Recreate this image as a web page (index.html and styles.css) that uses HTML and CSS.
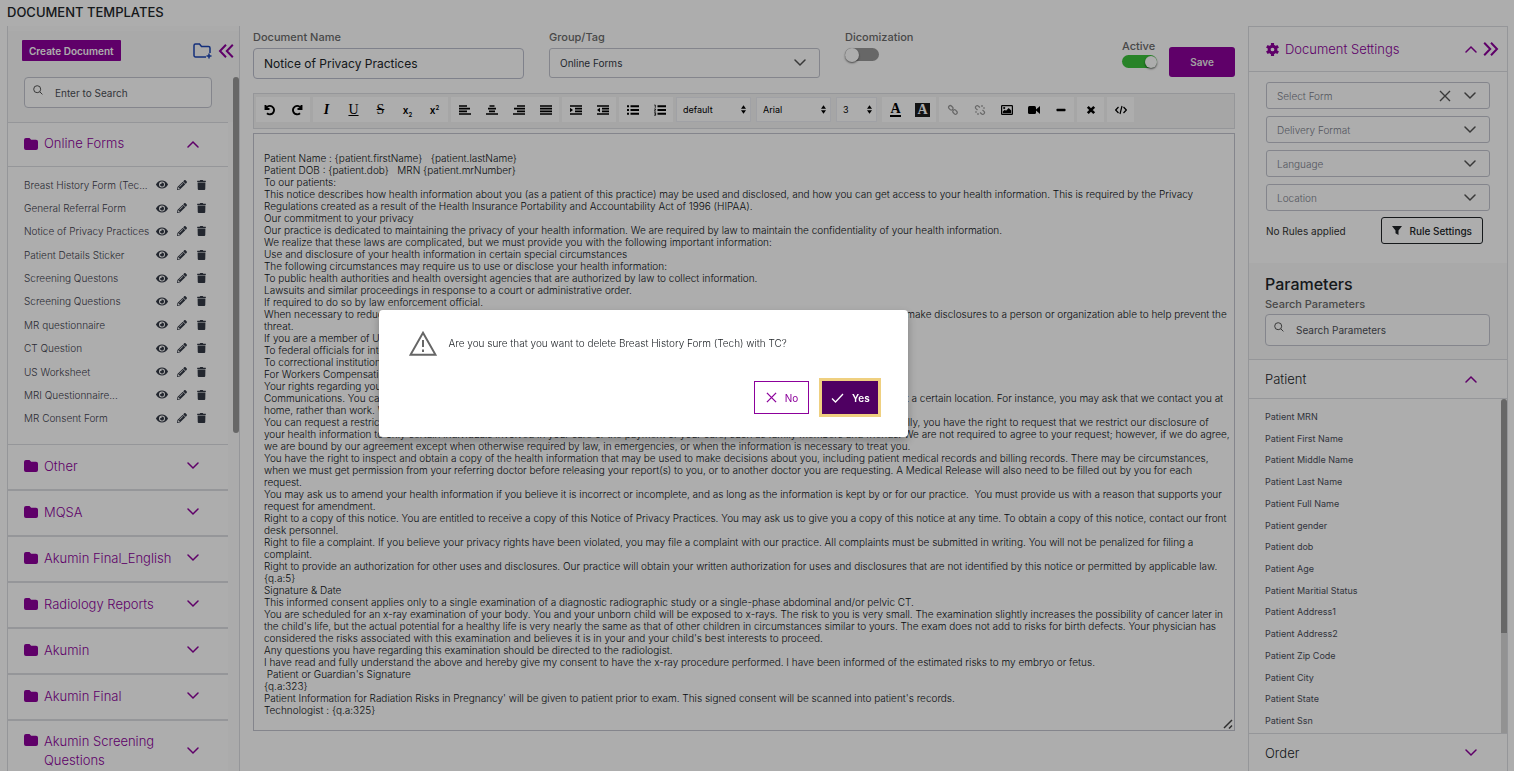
FILE: index.html
```html
<!DOCTYPE html>
<html lang="en">
<head>
<meta charset="utf-8">
<title>Document Templates</title>
<link rel="stylesheet" href="styles.css">
</head>
<body>
<svg class="sprite" aria-hidden="true">
  <symbol id="eye" viewBox="0 0 576 512"><path d="M572.52 241.4C518.29 135.59 410.93 64 288 64S57.68 135.64 3.48 241.41a32.35 32.35 0 0 0 0 29.19C57.71 376.41 165.07 448 288 448s230.32-71.64 284.52-177.41a32.35 32.35 0 0 0 0-29.19zM288 400a144 144 0 1 1 144-144 143.93 143.93 0 0 1-144 144zm0-240a95.31 95.31 0 0 0-25.31 3.79 47.85 47.85 0 0 1-66.9 66.9A95.78 95.78 0 1 0 288 160z"/></symbol>
  <symbol id="pen" viewBox="0 0 512 512"><path d="M497.9 142.1l-46.1 46.1c-4.7 4.7-12.3 4.7-17 0l-111-111c-4.7-4.7-4.7-12.3 0-17l46.1-46.1c18.7-18.7 49.1-18.7 67.9 0l60.1 60.1c18.8 18.7 18.8 49.1 0 67.9zM284.2 99.8L21.6 362.4.4 483.9c-2.9 16.4 11.4 30.6 27.8 27.8l121.5-21.3 262.6-262.6c4.7-4.7 4.7-12.3 0-17l-111-111c-4.8-4.7-12.4-4.7-17.1 0zM124.1 339.9c-5.5-5.5-5.5-14.3 0-19.8l154-154c5.5-5.5 14.3-5.5 19.8 0s5.5 14.3 0 19.8l-154 154c-5.5 5.5-14.3 5.5-19.8 0zM88 424h48v36.3l-64.5 11.3-31.1-31.1L51.7 376H88v48z"/></symbol>
  <symbol id="trash" viewBox="0 0 448 512"><path d="M432 32H312l-9.4-18.7A24 24 0 0 0 281.1 0H166.8a23.72 23.72 0 0 0-21.4 13.3L136 32H16A16 16 0 0 0 0 48v32a16 16 0 0 0 16 16h416a16 16 0 0 0 16-16V48a16 16 0 0 0-16-16zM32 467a48 48 0 0 0 47.900 45h288.200a48 48 0 0 0 47.900-45L424 128H24z"/></symbol>
  <symbol id="folder" viewBox="0 0 14 12"><path d="M2 0h3.5l1.6 1.8H12a2 2 0 0 1 2 2V10a2 2 0 0 1-2 2H2a2 2 0 0 1-2-2V2a2 2 0 0 1 2-2z"/></symbol>
  <symbol id="down" viewBox="0 0 12 8"><path d="M1 1l5 5 5-5" fill="none" stroke="currentColor" stroke-width="1.5" stroke-linecap="round"/></symbol>
  <symbol id="up" viewBox="0 0 12 8"><path d="M1 7l5-5 5 5" fill="none" stroke="currentColor" stroke-width="1.5" stroke-linecap="round"/></symbol>
  <symbol id="search" viewBox="0 0 10 10"><g fill="none" stroke="currentColor"><circle cx="4.2" cy="4.2" r="3.5"/><path d="M6.8 6.8l2.6 2.6"/></g></symbol>
  <symbol id="cross" viewBox="0 0 12 12"><path d="M1 1l10 10M11 1L1 11" fill="none" stroke="currentColor" stroke-width="1.4"/></symbol>
  <symbol id="sort" viewBox="0 0 6 10"><path d="M0 4l3-4 3 4zM0 6h6l-3 4z"/></symbol>
</svg>

<div class="page">
  <h1 class="page-title">DOCUMENT TEMPLATES</h1>
  <div class="columns">
    <aside class="sidebar">
      <div class="side-top">
        <div class="side-actions">
          <button class="create">Create Document</button>
          <button class="plain new-folder" aria-label="New folder"><svg width="19" height="16" viewBox="0 0 19 16"><path d="M13 14H2.500a1.500 1.500 0 0 1-1.500-1.500V2.500A1.500 1.500 0 0 1 2.500 1h4l2 2.500h7A1.500 1.500 0 0 1 17 5v5" fill="none" stroke="currentColor" stroke-width="1.500"/><path d="M16 10.500v5M13.500 13h5" stroke="currentColor" stroke-width="1.500"/></svg></button>
          <button class="plain" aria-label="Collapse"><svg width="16" height="14" viewBox="0 0 16 14"><path d="M8 .8L2 7l6 6.200M14.800.8L8.800 7l6 6.200" fill="none" stroke="currentColor" stroke-width="2"/></svg></button>
        </div>
        <label class="search-box"><svg class="i-search"><use href="#search"/></svg><input type="text" placeholder="Enter to Search" aria-label="Search documents"></label>
      </div>
      <div class="side-body">
        <button class="group first"><svg class="i-folder"><use href="#folder"/></svg><span>Online Forms</span><svg class="i-chev"><use href="#up"/></svg></button>
        <ul class="docs">
          <li><span>Breast History Form (Tec...</span><svg class="i-eye"><use href="#eye"/></svg><svg class="i-pen"><use href="#pen"/></svg><svg class="i-trash"><use href="#trash"/></svg></li>
          <li><span>General Referral Form</span><svg class="i-eye"><use href="#eye"/></svg><svg class="i-pen"><use href="#pen"/></svg><svg class="i-trash"><use href="#trash"/></svg></li>
          <li><span>Notice of Privacy Practices</span><svg class="i-eye"><use href="#eye"/></svg><svg class="i-pen"><use href="#pen"/></svg><svg class="i-trash"><use href="#trash"/></svg></li>
          <li><span>Patient Details Sticker</span><svg class="i-eye"><use href="#eye"/></svg><svg class="i-pen"><use href="#pen"/></svg><svg class="i-trash"><use href="#trash"/></svg></li>
          <li><span>Screening Questons</span><svg class="i-eye"><use href="#eye"/></svg><svg class="i-pen"><use href="#pen"/></svg><svg class="i-trash"><use href="#trash"/></svg></li>
          <li><span>Screening Questions</span><svg class="i-eye"><use href="#eye"/></svg><svg class="i-pen"><use href="#pen"/></svg><svg class="i-trash"><use href="#trash"/></svg></li>
          <li><span>MR questionnaire</span><svg class="i-eye"><use href="#eye"/></svg><svg class="i-pen"><use href="#pen"/></svg><svg class="i-trash"><use href="#trash"/></svg></li>
          <li><span>CT Question</span><svg class="i-eye"><use href="#eye"/></svg><svg class="i-pen"><use href="#pen"/></svg><svg class="i-trash"><use href="#trash"/></svg></li>
          <li><span>US Worksheet</span><svg class="i-eye"><use href="#eye"/></svg><svg class="i-pen"><use href="#pen"/></svg><svg class="i-trash"><use href="#trash"/></svg></li>
          <li><span>MRI Questionnaire...</span><svg class="i-eye"><use href="#eye"/></svg><svg class="i-pen"><use href="#pen"/></svg><svg class="i-trash"><use href="#trash"/></svg></li>
          <li><span>MR Consent Form</span><svg class="i-eye"><use href="#eye"/></svg><svg class="i-pen"><use href="#pen"/></svg><svg class="i-trash"><use href="#trash"/></svg></li>
        </ul>
        <button class="group"><svg class="i-folder"><use href="#folder"/></svg><span>Other</span><svg class="i-chev"><use href="#down"/></svg></button>
        <button class="group"><svg class="i-folder"><use href="#folder"/></svg><span>MQSA</span><svg class="i-chev"><use href="#down"/></svg></button>
        <button class="group"><svg class="i-folder"><use href="#folder"/></svg><span>Akumin Final_English</span><svg class="i-chev"><use href="#down"/></svg></button>
        <button class="group"><svg class="i-folder"><use href="#folder"/></svg><span>Radiology Reports</span><svg class="i-chev"><use href="#down"/></svg></button>
        <button class="group"><svg class="i-folder"><use href="#folder"/></svg><span>Akumin</span><svg class="i-chev"><use href="#down"/></svg></button>
        <button class="group"><svg class="i-folder"><use href="#folder"/></svg><span>Akumin Final</span><svg class="i-chev"><use href="#down"/></svg></button>
        <button class="group tall"><svg class="i-folder"><use href="#folder"/></svg><span>Akumin Screening Questions</span><svg class="i-chev"><use href="#down"/></svg></button>
      </div>
      <div class="side-scroll"></div>
    </aside>

    <main class="center">
      <div class="form-row">
        <div class="form-col">
          <label class="caption" for="doc-name">Document Name</label>
          <input class="doc-name" id="doc-name" type="text" value="Notice of Privacy Practices">
        </div>
        <div class="form-col">
          <label class="caption" for="group-tag">Group/Tag</label>
          <div class="select-box tag-box"><select id="group-tag"><option>Online Forms</option></select><svg class="i-chev"><use href="#down"/></svg></div>
        </div>
        <div class="form-col narrow">
          <label class="caption" for="dicom">Dicomization</label>
          <input class="toggle" id="dicom" type="checkbox">
        </div>
        <div class="form-end">
          <div class="active-col">
            <label class="caption" for="active">Active</label>
            <input class="toggle" id="active" type="checkbox" checked>
          </div>
          <button class="save">Save</button>
        </div>
      </div>

      <div class="toolbar">
        <div class="tools">
          <button aria-label="Undo"><svg viewBox="0 0 12 12"><path d="M1.500 1v4h4M2 4.500A4.200 4.200 0 1 1 3 9.200" fill="none" stroke="currentColor" stroke-width="1.900"/></svg></button>
          <button aria-label="Redo"><svg viewBox="0 0 12 12"><path d="M10.500 1v4h-4M10 4.500A4.200 4.200 0 1 0 9 9.200" fill="none" stroke="currentColor" stroke-width="1.900"/></svg></button>
        </div>
        <div class="tools">
          <button class="serif"><i>I</i></button>
          <button class="serif light"><u>U</u></button>
          <button class="serif light"><s>S</s></button>
          <button class="script">x<sub>2</sub></button>
          <button class="script">x<sup>2</sup></button>
        </div>
        <div class="tools">
          <button aria-label="Align left"><svg viewBox="0 0 12 12"><path d="M0 2h8M0 4.700h11M0 7.300h8M0 10h12" stroke="currentColor" stroke-width="1.700"/></svg></button>
          <button aria-label="Align centre"><svg viewBox="0 0 12 12"><path d="M3.500 2h5M2 4.700h8M3 7.300h6M0 10h12" stroke="currentColor" stroke-width="1.700"/></svg></button>
          <button aria-label="Align right"><svg viewBox="0 0 12 12"><path d="M4 2h8M1 4.700h11M4 7.300h8M0 10h12" stroke="currentColor" stroke-width="1.700"/></svg></button>
          <button aria-label="Justify"><svg viewBox="0 0 12 12"><path d="M0 2h12M0 4.700h12M0 7.300h12M0 10h12" stroke="currentColor" stroke-width="1.700"/></svg></button>
        </div>
        <div class="tools">
          <button aria-label="Indent"><svg viewBox="0 0 12 12"><path d="M0 2h12M5 4.700h7M5 7.300h7M0 10h12" stroke="currentColor" stroke-width="1.700"/><path d="M0 3.800L3 6 0 8.200z"/></svg></button>
          <button aria-label="Outdent"><svg viewBox="0 0 12 12"><path d="M0 2h12M5 4.700h7M5 7.300h7M0 10h12" stroke="currentColor" stroke-width="1.700"/><path d="M3 3.800L0 6l3 2.200z"/></svg></button>
        </div>
        <div class="tools">
          <button aria-label="Bulleted list"><svg viewBox="0 0 12 12"><path d="M0 2.200h2M0 6h2M0 9.800h2M3.500 2.200H12M3.500 6H12M3.500 9.800H12" stroke="currentColor" stroke-width="2"/></svg></button>
          <button aria-label="Numbered list"><svg viewBox="0 0 12 12"><path d="M3.500 2.200H12M3.500 6H12M3.500 9.800H12" stroke="currentColor" stroke-width="2"/><path d="M.3 1h1v2.800M.2 5h1.500L.4 7.200h1.400M.2 8.700h1.400v2.600H.2M.4 10h1.200" fill="none" stroke="currentColor" stroke-width=".8"/></svg></button>
        </div>
        <div class="tool-select block"><select aria-label="Block style"><option>default</option></select><svg class="i-sort"><use href="#sort"/></svg></div>
        <div class="tool-select face"><select aria-label="Font"><option>Arial</option></select><svg class="i-sort"><use href="#sort"/></svg></div>
        <div class="tool-select size"><select aria-label="Font size"><option>3</option></select><svg class="i-sort"><use href="#sort"/></svg></div>
        <div class="tools">
          <button class="ink"><span>A</span></button>
          <button class="ink mark"><span>A</span></button>
        </div>
        <div class="tools">
          <button class="off" aria-label="Link"><svg viewBox="0 0 12 12"><g fill="none" stroke="currentColor" stroke-width="1.300"><rect x="-2.400" y="-1.700" width="4.800" height="3.400" rx="1.500" transform="translate(3.800 3.800) rotate(45)"/><rect x="-2.400" y="-1.700" width="4.800" height="3.400" rx="1.500" transform="translate(8 8) rotate(45)"/></g></svg></button>
          <button class="off" aria-label="Unlink"><svg viewBox="0 0 12 12"><path d="M6 3.500L4.500 2.200A1.600 1.600 0 0 0 2 4.600L3.500 6M6 8.500L7.500 9.800A1.600 1.600 0 0 0 10 7.400L8.500 6M8 1v2M11 4H9M4 11V9M1 8h2" fill="none" stroke="currentColor" stroke-width="1.200"/></svg></button>
          <button aria-label="Image"><svg viewBox="0 0 12 12"><rect x=".6" y="1.600" width="10.800" height="8.800" rx=".6" fill="none" stroke="currentColor" stroke-width="1.200"/><circle cx="3.200" cy="4" r="1.100"/><path d="M1.800 9.200V7.500l2-1.800 1.200 1 2.700-2.800 2.500 2.600v2.700z"/></svg></button>
          <button aria-label="Video"><svg viewBox="0 0 12 12"><rect y="2" width="8" height="8" rx="1.500"/><path d="M8 5.500L12 2v8L8 6.500z"/></svg></button>
          <button aria-label="Rule"><svg viewBox="0 0 12 12"><rect x="1.500" y="4.800" width="9" height="2.400" rx=".6"/></svg></button>
        </div>
        <div class="tools"><button aria-label="Clear formatting"><svg viewBox="0 0 12 12"><path d="M2.800 2.800l6.400 6.400M9.200 2.800L2.800 9.200" stroke="currentColor" stroke-width="2.600"/></svg></button></div>
        <div class="tools"><button aria-label="Source"><svg viewBox="0 0 12 12"><path d="M3.500 3L.7 6l2.800 3M8.500 3l2.800 3-2.800 3M7 2L5 10" fill="none" stroke="currentColor" stroke-width="1.200"/></svg></button></div>
      </div>

      <div class="editor">
        <p>Patient Name : {patient.firstName} &nbsp; {patient.lastName}</p>
        <p>Patient DOB : {patient.dob} &nbsp; MRN {patient.mrNumber}</p>
        <p>To our patients:</p>
        <p>This notice describes how health information about you (as a patient of this practice) may be used and disclosed, and how you can get access to your health information. This is required by the Privacy<br>Regulations created as a result of the Health Insurance Portability and Accountability Act of 1996 (HIPAA).</p>
        <p>Our commitment to your privacy</p>
        <p>Our practice is dedicated to maintaining the privacy of your health information. We are required by law to maintain the confidentiality of your health information.</p>
        <p>We realize that these laws are complicated, but we must provide you with the following important information:</p>
        <p>Use and disclosure of your health information in certain special circumstances</p>
        <p>The following circumstances may require us to use or disclose your health information:</p>
        <p>To public health authorities and health oversight agencies that are authorized by law to collect information.</p>
        <p>Lawsuits and similar proceedings in response to a court or administrative order.</p>
        <p>If required to do so by law enforcement official.</p>
        <p>When necessary to reduce or prevent a serious threat to your health and safety or the health and safety of another individual. We will only make disclosures to a person or organization able to help prevent the<br>threat.</p>
        <p>If you are a member of U.S. or foreign military forces (including veterans) and if required by the appropriate authorities.</p>
        <p>To federal officials for intelligence and national security activities authorized by law.</p>
        <p>To correctional institutions or law enforcement officials if you are an inmate or under the custody of an official.</p>
        <p>For Workers Compensation and similar programs.</p>
        <p>Your rights regarding your health information:</p>
        <p>Communications. You can request that our practice communicate with you about your health and related issues in a particular manner or at a certain location. For instance, you may ask that we contact you at<br>home, rather than work. We will accommodate reasonable requests.</p>
        <p>You can request a restriction in our use or disclosure of your health information for treatment, payment or health care operations. Additionally, you have the right to request that we restrict our disclosure of<br>your health information to only certain individuals involved in your care or the payment of your care, such as family members and friends. We are not required to agree to your request; however, if we do agree,<br>we are bound by our agreement except when otherwise required by law, in emergencies, or when the information is necessary to treat you.</p>
        <p>You have the right to inspect and obtain a copy of the health information that may be used to make decisions about you, including patient medical records and billing records. There may be circumstances,<br>when we must get permission from your referring doctor before releasing your report(s) to you, or to another doctor you are requesting. A Medical Release will also need to be filled out by you for each<br>request.</p>
        <p>You may ask us to amend your health information if you believe it is incorrect or incomplete, and as long as the information is kept by or for our practice. &nbsp;You must provide us with a reason that supports your<br>request for amendment.</p>
        <p>Right to a copy of this notice. You are entitled to receive a copy of this Notice of Privacy Practices. You may ask us to give you a copy of this notice at any time. To obtain a copy of this notice, contact our front<br>desk personnel.</p>
        <p>Right to file a complaint. If you believe your privacy rights have been violated, you may file a complaint with our practice. All complaints must be submitted in writing. You will not be penalized for filing a<br>complaint.</p>
        <p>Right to provide an authorization for other uses and disclosures. Our practice will obtain your written authorization for uses and disclosures that are not identified by this notice or permitted by applicable law.</p>
        <p>{q.a:5}</p>
        <p>Signature &amp; Date</p>
        <p>This informed consent applies only to a single examination of a diagnostic radiographic study or a single-phase abdominal and/or pelvic CT.</p>
        <p>You are scheduled for an x-ray examination of your body. You and your unborn child will be exposed to x-rays. The risk to you is very small. The examination slightly increases the possibility of cancer later in<br>the child's life, but the actual potential for a healthy life is very nearly the same as that of other children in circumstances similar to yours. The exam does not add to risks for birth defects. Your physician has<br>considered the risks associated with this examination and believes it is in your and your child's best interests to proceed.</p>
        <p>Any questions you have regarding this examination should be directed to the radiologist.</p>
        <p>I have read and fully understand the above and hereby give my consent to have the x-ray procedure performed. I have been informed of the estimated risks to my embryo or fetus.</p>
        <p>&nbsp;Patient or Guardian's Signature</p>
        <p>{q.a:323}</p>
        <p>Patient Information for Radiation Risks in Pregnancy' will be given to patient prior to exam. This signed consent will be scanned into patient's records.</p>
        <p>Technologist : {q.a:325}</p>
        <svg class="grip" viewBox="0 0 10 10"><path d="M1 9l8-8M6 9.500l3-3" stroke="currentColor" stroke-width="1.500"/></svg>
      </div>
    </main>

    <aside class="settings">
      <div class="set-head">
        <svg class="i-gear" viewBox="0 0 14 14"><circle cx="7" cy="7" r="3.600" fill="none" stroke="currentColor" stroke-width="3.200"/><path d="M7 0v3M7 11v3M.9 3.500l2.600 1.500M10.500 9l2.600 1.500M.9 10.500L3.500 9M10.500 5l2.600-1.500" stroke="currentColor" stroke-width="3.400"/></svg>
        <h2>Document Settings</h2>
        <svg class="i-chev"><use href="#up"/></svg>
        <button class="plain" aria-label="Expand"><svg width="16" height="14" viewBox="0 0 16 14"><path d="M1.200.8l6 6.200-6 6.200M8 .8L14 7l-6 6.200" fill="none" stroke="currentColor" stroke-width="2"/></svg></button>
      </div>
      <div class="set-body">
        <div class="select-box"><select aria-label="Select Form"><option>Select Form</option></select><svg class="i-clear"><use href="#cross"/></svg><svg class="i-chev"><use href="#down"/></svg></div>
        <div class="select-box"><select aria-label="Delivery Format"><option>Delivery Format</option></select><svg class="i-chev"><use href="#down"/></svg></div>
        <div class="select-box"><select aria-label="Language"><option>Language</option></select><svg class="i-chev"><use href="#down"/></svg></div>
        <div class="select-box"><select aria-label="Location"><option>Location</option></select><svg class="i-chev"><use href="#down"/></svg></div>
        <div class="rules"><span>No Rules applied</span><button class="rule-btn"><svg width="10" height="9" viewBox="0 0 10 9"><path d="M0 0h10L6.500 4.500V9l-3-1.800V4.500z"/></svg>Rule Settings</button></div>
      </div>
      <div class="params">
        <h2>Parameters</h2>
        <label class="caption" for="param-search">Search Parameters</label>
        <div class="search-box"><svg class="i-search"><use href="#search"/></svg><input id="param-search" type="text" placeholder="Search Parameters"></div>
      </div>
      <button class="p-group"><span>Patient</span><svg class="i-chev"><use href="#up"/></svg></button>
      <div class="p-list">
        <ul>
          <li>Patient MRN</li><li>Patient First Name</li><li>Patient Middle Name</li><li>Patient Last Name</li><li>Patient Full Name</li><li>Patient gender</li><li>Patient dob</li><li>Patient Age</li><li>Patient Maritial Status</li><li>Patient Address1</li><li>Patient Address2</li><li>Patient Zip Code</li><li>Patient City</li><li>Patient State</li><li>Patient Ssn</li>
        </ul>
        <div class="p-scroll"></div>
      </div>
      <button class="p-group"><span>Order</span><svg class="i-chev"><use href="#down"/></svg></button>
    </aside>
  </div>
</div>

<div class="backdrop"></div>
<div class="dialog" role="dialog" aria-modal="true" aria-labelledby="ask">
  <div class="ask">
    <svg width="28" height="25" viewBox="0 0 28 25"><path d="M14 1.800L26.500 23.800h-25z" fill="none" stroke="#666" stroke-width="2"/><path d="M14 9v7M14 18.500v2.500" stroke="#666" stroke-width="2"/></svg>
    <p id="ask">Are you sure that you want to delete Breast History Form (Tech) with TC?</p>
  </div>
  <div class="answers">
    <button class="no"><svg width="11" height="11"><use href="#cross"/></svg>No</button>
    <button class="yes"><svg width="13" height="10" viewBox="0 0 13 10"><path d="M1 5.500L4.500 9 12 1" fill="none" stroke="currentColor" stroke-width="1.300"/></svg>Yes</button>
  </div>
</div>
</body>
</html>
```
FILE: styles.css
```css
* { box-sizing: border-box; }
body {
  margin: 0;
  height: 100vh;
  overflow: hidden;
  background: #fff;
  color: #212529;
  font: 300 10px/12px Inter, "Open Sans", sans-serif;
}
button, input, select { font: inherit; color: inherit; margin: 0; }
button { padding: 0; border: 0; background: none; }
select { appearance: none; width: 100%; background: none; border: 0; padding: 0 10px; }
ul { list-style: none; margin: 0; padding: 0; }
h1, h2, p { margin: 0; }
svg { fill: currentColor; flex: none; display: block; }
.sprite { position: absolute; width: 0; height: 0; }

.page { height: 100vh; display: flex; flex-direction: column; padding: 0 6px 0 7px; }
.page-title { font-size: 13px; line-height: 24px; padding-bottom: 2px; font-weight: 500; }
.columns { flex: 1; min-height: 0; display: grid; grid-template-columns: 233px minmax(0, 1fr) 260px; }

.i-chev { width: 12px; height: 8px; }
.i-folder { width: 14px; height: 12px; }
.i-search { width: 10px; height: 10px; }
.i-eye { width: 12px; height: 11px; }
.i-pen { width: 10px; height: 10px; }
.i-trash { width: 9px; height: 10px; }
.i-sort { width: 5px; height: 9px; }
.i-clear { width: 12px; height: 12px; margin-right: 13px; color: #555; }
.i-gear { width: 13px; height: 13px; }
.plain { color: #8c009b; }
.caption { font-size: 11px; line-height: 14px; font-weight: 500; color: #6b6b6b; display: block; }

/* template list */
.sidebar {
  position: relative;
  display: grid;
  grid-template: auto minmax(0, 1fr) / minmax(0, 1fr) 11px;
  border: solid #dcdde2;
  border-width: 0 1px;
  margin-bottom: 3px;
  padding-top: 5px;
  background: #fcfcfc;
}
.sidebar::after { content: ""; position: absolute; right: 0; top: 51px; width: 6px; height: 356px; border-radius: 3px; background: #999; }
.side-top { grid-column: 1 / -1; padding: 9px 5px 14px 14px; background: #fafafa; }
.side-actions { display: flex; align-items: center; }
.create { background: #8c009b; color: #fff; font-size: 10px; font-weight: 600; height: 21px; padding: 0 7px; border-radius: 1px; margin-right: auto; }
.new-folder { color: #1d45b5; margin-right: 6px; }
.search-box { display: flex; align-items: flex-start; gap: 12px; height: 31px; border: 1px solid #c3c5cf; border-radius: 4px; padding: 7px 8px; background: #fff; color: #555; }
.side-top .search-box { margin: 16px 22px 0 2px; }
.search-box input { flex: 1; min-width: 0; border: 0; background: none; padding: 0; height: 16px; font-size: 10px; font-weight: 400; }
.search-box input::placeholder { color: #4d4f57; }
.side-body { overflow: hidden; background: #fff; }
.group {
  width: 100%;
  min-height: 46px;
  display: grid;
  grid-template-columns: 14px 1fr 12px;
  column-gap: 6px;
  align-items: center;
  text-align: left;
  padding: 0 29px 2px 16px;
  border-bottom: 2px solid #dcdde2;
  color: #8c009b;
  font-size: 13px;
  line-height: 19px;
}
.group.first { min-height: 45px; border: solid #dcdde2; border-width: 1px 0; }
.group.tall { padding-top: 11px; padding-bottom: 12px; }
.group.tall .i-folder { align-self: start; margin-top: 2px; }
.docs { min-height: 278px; display: grid; grid-auto-rows: 1fr; padding: 6px 21px 14px 16px; border-bottom: 1px solid #dcdde2; }
.docs li { display: grid; grid-template-columns: 132px 21px 20px 1fr; align-items: center; color: #3f424e; }
.docs span { white-space: nowrap; }
.docs svg { color: #343a46; }
.side-scroll { background: #fcfcfc; }

/* editor column */
.center { padding: 4px 13px 0; display: flex; flex-direction: column; }
.form-row { display: flex; gap: 25px; height: 63px; }
.form-col { flex: 0 1 271px; }
.form-col.narrow { flex: 0 0 80px; }
.doc-name { width: 100%; height: 31px; margin-top: 4px; border: 1px solid #bcbfcd; border-radius: 4px; padding: 0 10px; font-size: 12px; font-weight: 400; background: #fff; }
.select-box { display: flex; align-items: center; height: 27px; border: 1px solid #c3c5cf; border-radius: 3px; padding-right: 13px; background: #fff; }
.select-box select { flex: 1; min-width: 0; height: 100%; color: #7b808c; }
.select-box .i-chev { color: #555; }
.select-box.tag-box { height: 30px; margin-top: 4px; }
.select-box.tag-box select { color: #343a46; font-weight: 400; }
.toggle { appearance: none; display: flex; align-items: center; width: 34px; height: 13px; margin: 4px 0 0; border-radius: 7px; background: #999; }
.toggle::before { content: ""; width: 14px; height: 14px; border-radius: 50%; background: #fff; box-shadow: 0 1px 2px #0009; }
.toggle:checked { background: #3bc23b; justify-content: flex-end; }
.toggle:checked::before { width: 12px; height: 12px; }
.form-end { margin-left: auto; display: flex; gap: 12px; align-items: flex-start; padding-top: 9px; }
.active-col .toggle { margin-top: 2px; width: 35px; }
.save { background: #8c009b; color: #eee; width: 66px; height: 30px; margin-top: 8px; border-radius: 3px; font-size: 10px; font-weight: 600; }

.toolbar { display: flex; flex-wrap: wrap; align-items: flex-start; gap: 3px; padding: 3px 2px; min-height: 36px; background: #f5f5f5; border: 1px solid #dcdde2; }
.tools { display: flex; background: #fff; height: 25px; }
.tools button { width: 27px; display: grid; place-items: center; color: #000; }
.tools svg { width: 12px; height: 12px; }
.tools .off { color: #999; }
.tools .serif { font: bold 14px/25px "Liberation Serif", serif; }
.tools .light { font-weight: 400; }
.tools .script { display: block; font-size: 10px; font-weight: 600; }
.tools sub, .tools sup { font-size: 6px; line-height: 0; }
.ink span { font: bold 14px/12px "Liberation Serif", serif; border-bottom: 2px solid #000; }
.ink.mark span { background: #1c1c1c; color: #fff; border: 0; padding: 1px 2px; }
.tool-select { display: flex; align-items: center; height: 25px; background: #fff; border: 1px solid #eceef3; padding-right: 4px; color: #000; }
.tool-select select { flex: 1; min-width: 0; padding: 0 6px; font-size: 9px; font-weight: 400; }
.tool-select.block { width: 75px; }
.tool-select.face { width: 75px; margin-left: 2px; }
.tool-select.size { width: 41px; margin: 0 2px; }

.editor { position: relative; margin-top: 4px; border: 1px solid #c3c5cf; padding: 18px 10px 13px; min-height: 598px; background: #fff; white-space: nowrap; color: #0c1014; }
.grip { position: absolute; right: 1px; bottom: 1px; width: 10px; height: 10px; color: #444; }

/* settings column */
.settings { display: flex; flex-direction: column; overflow: hidden; border: 1px solid #dcdde2; border-bottom: 0; background: #fff; }
.set-head { display: flex; align-items: center; gap: 6px; height: 45px; flex: none; padding: 0 8px 0 17px; border-bottom: 1px solid #dcdde2; color: #8c009b; }
.set-head h2 { flex: 1; font-size: 13px; font-weight: 300; }
.set-body { display: grid; gap: 7px; padding: 10px 17px 20px; }
.rules { display: flex; justify-content: space-between; align-items: center; height: 25px; padding-right: 7px; color: #333; font-weight: 400; }
.rule-btn { display: flex; align-items: center; gap: 7px; height: 27px; padding: 0 10px; border: 1px solid #212529; border-radius: 3px; color: #212529; font-size: 10px; font-weight: 500; }
.params { background: #f9f9f9; padding: 8px 17px 13px 16px; border-bottom: 1px solid #dcdde2; }
.params h2 { font-size: 16px; line-height: 26px; font-weight: 500; }
.params .search-box { margin-top: 3px; height: 32px; }
.p-group { display: flex; justify-content: space-between; align-items: center; flex: none; height: 39px; padding: 0 30px 0 16px; font-size: 13px; border-bottom: 1px solid #dcdde2; }
.p-group svg { color: #8c009b; }
.p-list { display: flex; flex: none; justify-content: space-between; border-bottom: 1px solid #dcdde2; }
.p-list ul { display: grid; grid-auto-rows: 1fr; min-height: 334px; padding: 7px 16px 1px; }
.p-list li { display: flex; align-items: center; color: #4b4e5a; font-size: 9px; font-weight: 400; }
.p-scroll { width: 6px; background: linear-gradient(#999, #999) top / 6px 234px no-repeat #d8d8d8; border-radius: 3px 3px 0 0; }

/* confirmation */
.backdrop { position: fixed; inset: 0; background: rgba(0, 0, 0, .32); }
.dialog { position: fixed; left: 25%; top: 310px; width: 35%; background: #fff; border-radius: 4px; padding: 20px 30px 23px; box-shadow: 0 4px 10px #0004; }
.ask { display: flex; align-items: center; gap: 12px; height: 26px; }
.answers { display: flex; justify-content: flex-end; gap: 13px; margin-top: 25px; }
.answers button { display: flex; align-items: center; justify-content: center; gap: 8px; height: 33px; font-size: 10px; }
.answers .no { width: 55px; border: 1px solid #8c009b; color: #8c009b; font-weight: 400; }
.answers .yes { width: 56px; background: #4f0062; color: #fff; font-weight: 600; outline: 3px solid #efd080; }
```
